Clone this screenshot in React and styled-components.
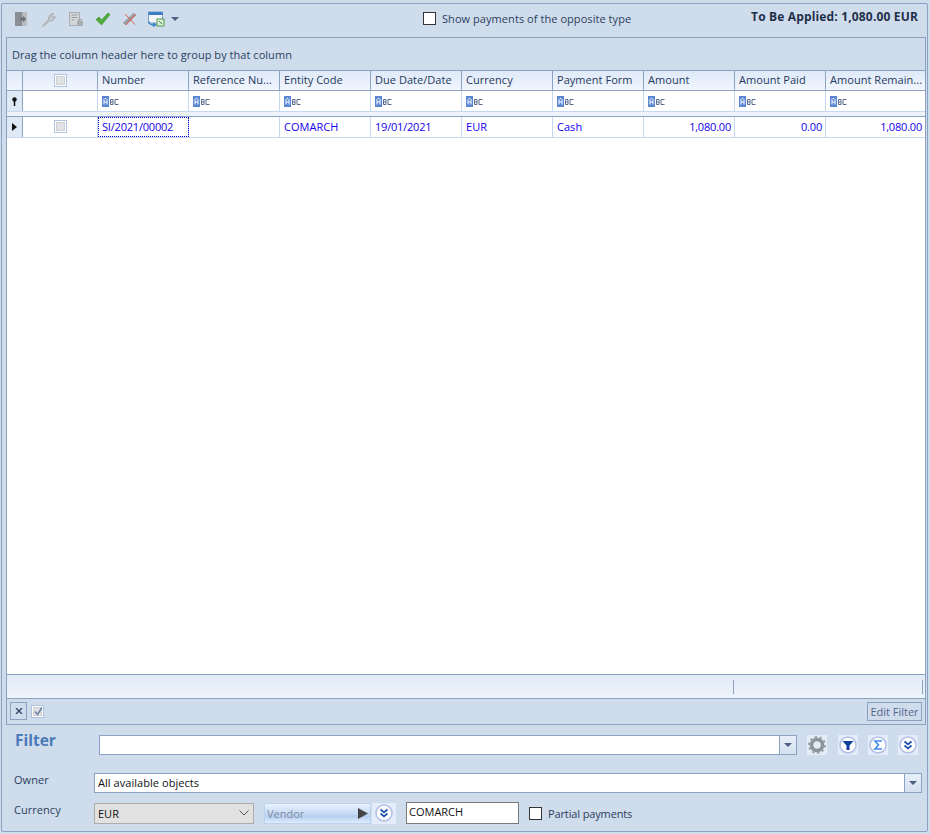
import React from "react";
import styled, { createGlobalStyle } from "styled-components";

const Global = createGlobalStyle`
  html, body { margin: 0; padding: 0; background: #cfdcec; }
  body { font-family: "Open Sans", "Liberation Sans", sans-serif; font-size: 11px; color: #1e395b; }
  * { box-sizing: border-box; }
`;

const Frame = styled.div`
  width: 927px;
  height: 829px;
  margin: 3px 0 0 1px;
  padding: 0 1px 0 4px;
  border: 1px solid #8ba2c0;
  border-radius: 2px;
  display: flex;
  flex-direction: column;
`;

const Toolbar = styled.div`
  height: 33px;
  display: flex;
  align-items: center;
  padding: 0 8px 3px 2px;
  flex: none;
`;

const ToolIcon = styled.span`
  width: 27px;
  height: 24px;
  display: flex;
  align-items: center;
  justify-content: center;
  flex: none;
`;

const Caret = styled.span`
  width: 0;
  height: 0;
  margin-left: 1px;
  border-left: 4px solid transparent;
  border-right: 4px solid transparent;
  border-top: 4px solid #4c5f80;
`;

const Check = styled.span`
  position: relative;
  width: 13px;
  height: 13px;
  flex: none;
  background: ${(p) => (p.$muted ? "#e0e2e5" : "#fff")};
  border: 1px solid ${(p) => (p.$muted ? "#aec3e2" : "#333")};
  box-shadow: ${(p) => (p.$muted ? "inset 0 0 0 1px #fff, inset 0 0 0 2px #cfd1d4" : "none")};
  display: inline-block;
`;

const Tick = styled.svg`
  position: absolute;
  left: 1px;
  top: 0;
`;

const OppositeToggle = styled.label`
  display: flex;
  align-items: center;
  gap: 6px;
  margin: 0 0 2px 244px;
  letter-spacing: 0.06px;
  color: #2b3f5f;
`;

const ToApply = styled.div`
  margin-left: auto;
  margin-bottom: 5px;
  font-weight: 700;
  font-size: 12px;
  letter-spacing: 0.16px;
  color: #1f2f4a;
`;

const Grid = styled.div`
  flex: 1;
  display: flex;
  flex-direction: column;
  border: 1px solid #8ba2c0;
  border-bottom: none;
  min-height: 0;
`;

const GroupPanel = styled.div`
  height: 33px;
  flex: none;
  padding: 9px 0 0 5px;
  line-height: 15px;
  letter-spacing: 0.04px;
  color: #2b3f5f;
  border-bottom: 1px solid #8ba2c0;
`;

const Row = styled.div`
  display: grid;
  grid-template-columns: 16px 75px repeat(8, 91px) 1fr;
  flex: none;
  height: ${(p) => p.$h}px;
  background: #fff;
  border-bottom: 1px solid ${(p) => p.$line || "#c5d8f0"};
`;

const Indicator = styled.div`
  background: ${(p) => (p.$head ? "linear-gradient(#dfe9f8, #f1f6fe)" : "#dfe9f6")};
  border-right: 1px solid #8ba2c0;
  display: flex;
  align-items: center;
  justify-content: center;
`;

const HeadCell = styled.div`
  padding: 0 0 ${(p) => (p.$center ? 0 : 3)}px ${(p) => (p.$center ? 0 : 4)}px;
  white-space: nowrap;
  overflow: hidden;
  color: #1e395b;
  letter-spacing: 0.04px;
  background: linear-gradient(#dfe9f8, #f1f6fe);
  border-right: ${(p) => (p.$last ? "none" : "1px solid #8ba2c0")};
  display: flex;
  align-items: center;
  justify-content: ${(p) => (p.$center ? "center" : "flex-start")};
`;

const FilterCell = styled.div`
  border-right: ${(p) => (p.$last ? "none" : "1px solid #c5d8f0")};
  padding: 5px 0 0 4px;
  display: flex;
  align-items: flex-start;
`;

const DataCell = styled.div`
  padding: 0 ${(p) => (p.$right ? "3px" : "0")} 2px ${(p) => (p.$center ? 0 : 4)}px;
  border-right: ${(p) => (p.$last ? "none" : "1px solid #c5d8f0")};
  color: #1400f0;
  letter-spacing: ${(p) => (p.$digits ? "-0.2px" : "0.04px")};
  display: flex;
  align-items: center;
  justify-content: ${(p) => (p.$right ? "flex-end" : p.$center ? "center" : "flex-start")};
  outline: ${(p) => (p.$focus ? "1px dotted #0000c8" : "none")};
  outline-offset: -1px;
`;

const Spacer = styled.div`
  height: 5px;
  flex: none;
  background: #eef3fa;
  border-bottom: 1px solid #8ba2c0;
`;

const Empty = styled.div`
  flex: 1;
  background: #fff;
  border-bottom: 1px solid #8ba2c0;
`;

const GridFooter = styled.div`
  height: 24px;
  flex: none;
  background: linear-gradient(#e0eaf7, #eef4fc);
  border-bottom: 1px solid #8ba2c0;
  display: flex;
  justify-content: flex-end;
  align-items: center;
  padding-right: 2px;
`;

const FooterCell = styled.span`
  width: ${(p) => p.$w}px;
  height: 14px;
  border-right: 1px solid #8ba2c0;
`;

const FilterBar = styled.div`
  height: 26px;
  flex: none;
  display: flex;
  align-items: center;
  padding: 0 3px 1px 3px;
  border-bottom: 1px solid #8ba2c0;
`;

const CloseBtn = styled.span`
  width: 17px;
  height: 18px;
  border: 1px solid #8ba2c0;
  display: flex;
  align-items: center;
  justify-content: center;
  margin-right: 4px;
`;

const EditFilter = styled.span`
  margin-left: auto;
  width: 55px;
  height: 19px;
  border: 1px solid #8ba2c0;
  display: flex;
  align-items: center;
  justify-content: center;
  color: #55658a;
`;

const Panel = styled.div`
  flex: none;
  height: 106px;
  display: flex;
  flex-direction: column;
  padding: 0 3px 0 8px;
`;

const TopLine = styled.div`
  display: flex;
  align-items: center;
  height: 39px;
  flex: none;
`;

const FilterTitle = styled.div`
  width: 84px;
  margin: -10px 0 0 1px;
  font-size: 15.5px;
  font-weight: 700;
  color: #4a7ab8;
  flex: none;
`;

const Combo = styled.div`
  display: flex;
  width: ${(p) => p.$w}px;
  height: 20px;
  flex: none;
  background: #fff;
  border: 1px solid #8ba2c0;
`;

const ComboText = styled.div`
  flex: 1;
  padding-left: 3px;
  line-height: 18px;
  color: #111;
  letter-spacing: 0.05px;
`;

const ComboBtn = styled.div`
  width: 17px;
  background: linear-gradient(#e7eff9, #d5e1f0);
  border-left: 1px solid #8ba2c0;
  display: flex;
  align-items: center;
  justify-content: center;
`;

const RoundIcon = styled.span`
  width: 20px;
  height: 20px;
  margin-left: ${(p) => p.$ml}px;
  flex: none;
  display: flex;
  align-items: center;
  justify-content: center;
  background: #e3ecf8;
`;

const FieldRow = styled.div`
  display: flex;
  align-items: center;
  height: 22px;
  flex: none;
  margin: ${(p) => p.$mt || 0}px 0 8px;
`;

const Label = styled.div`
  width: 80px;
  flex: none;
  margin-top: -8px;
  color: #2b3f5f;
  letter-spacing: 0.04px;
`;

const SelectBox = styled.div`
  width: 160px;
  height: 21px;
  background: #e1e1e1;
  border: 1px solid #adadad;
  display: flex;
  align-items: center;
  justify-content: space-between;
  padding: 0 4px 0 3px;
  color: #111;
  flex: none;
`;

const VendorBtn = styled.div`
  width: 107px;
  height: 21px;
  margin-left: 10px;
  padding: 0 2px;
  flex: none;
  display: flex;
  align-items: center;
  justify-content: space-between;
  color: #7f8ba0;
  border: 1px solid #bcd2ee;
  background: linear-gradient(#eaf2fc 0%, #c6daf4 50%, #b5cff1 65%, #e0ecfb 100%);
`;

const VendorMore = styled.span`
  width: 24px;
  height: 21px;
  margin: 0 10px 0 1px;
  flex: none;
  display: flex;
  align-items: center;
  justify-content: center;
  background: #e3ecf8;
`;

const TextBox = styled.div`
  width: 113px;
  height: 22px;
  flex: none;
  background: #fff;
  border: 1px solid #7a7a7a;
  padding-left: 2px;
  line-height: 18px;
  color: #111;
`;

const PartialToggle = styled.label`
  display: flex;
  align-items: center;
  gap: 6px;
  margin-left: 10px;
  letter-spacing: -0.13px;
  color: #2b3f5f;
`;

const Abc = () => (
  <svg width="17" height="11" viewBox="0 0 17 11">
    <rect width="7" height="11" fill="#5b86d2" />
    <path d="M2 8.500V3.500L3 2.500h1l1 1V8.500M2 6h3" fill="none" stroke="#fff" />
    <path d="M8.500 3.500v5h2.500V6H8.500M8.500 3.500H11V6M16.500 3.500h-3.500v5h3.500" fill="none" stroke="#5a6c8c" />
  </svg>
);

const Chevron = ({ color = "#4c5f80" }) => (
  <svg width="8" height="4" viewBox="0 0 8 4"><path d="M0 0h8L4 4z" fill={color} /></svg>
);

const DoubleDown = () => (
  <svg width="20" height="20" viewBox="0 0 20 20">
    <circle cx="10" cy="10" r="8" fill="#fff" stroke="#b4c0e6" strokeWidth="1.6" />
    <path d="M6.500 6.500 10 9.500l3.500-3M6.500 10.500l3.500 3 3.500-3" fill="none" stroke="#1c4fa8" strokeWidth="1.7" />
  </svg>
);

const columns = [
  "Number", "Reference Nu...", "Entity Code", "Due Date/Date", "Currency",
  "Payment Form", "Amount", "Amount Paid", "Amount Remain...",
];

const rowData = [
  { v: "SI/2021/00002", focus: true, digits: true }, { v: "" }, { v: "COMARCH" }, { v: "19/01/2021", digits: true }, { v: "EUR" },
  { v: "Cash" }, { v: "1,080.00", right: true, digits: true }, { v: "0.00", right: true, digits: true }, { v: "1,080.00", right: true, digits: true },
];

function App() {
  return (
    <>
      <Global />
      <Frame>
        <Toolbar>
          <ToolIcon>
            <svg width="14" height="14" viewBox="0 0 14 14">
              <rect x="0" y="0" width="12" height="14" fill="#b9bcc0" />
              <rect x="0" y="0" width="7" height="14" fill="#8b8f94" />
              <path d="M5 5.500h3V3.500l3 3.500-3 3.500V8.500H5z" fill="#6f7377" />
            </svg>
          </ToolIcon>
          <ToolIcon>
            <svg width="16" height="16" viewBox="0 0 16 16">
              <path d="M1.500 14.500 8 8c-.8-2.500 1-5.500 4.500-5.500L10.500 5l1 1.500 2.500-1c.3 3-2.500 5-5.500 4.200l-6 6z" fill="#c6c9cc" stroke="#a5a9ae" />
            </svg>
          </ToolIcon>
          <ToolIcon>
            <svg width="16" height="16" viewBox="0 0 16 16">
              <path d="M1.500 1.500h10v13h-10z" fill="#d4d7da" stroke="#a8acb0" />
              <path d="M3.500 4h6M3.500 6.500h6M3.500 9h3" stroke="#979ba0" />
              <rect x="9" y="10" width="6" height="5" fill="#a9adb1" />
              <path d="M10.500 10V8.500h3V10" fill="none" stroke="#a0a4a8" />
            </svg>
          </ToolIcon>
          <ToolIcon>
            <svg width="16" height="14" viewBox="0 0 16 14">
              <path d="M1 7.500 4 5l2.500 3L13 1l2 1.500L6.500 13z" fill="#4fae3a" stroke="#2f8a2a" strokeWidth=".6" />
            </svg>
          </ToolIcon>
          <ToolIcon>
            <svg width="16" height="14" viewBox="0 0 16 14">
              <path d="M2 12 13 2" stroke="#9a9ea3" strokeWidth="3.500" />
              <path d="M3 2l10 10.500M13.500 2.500 4 13" stroke="#e5493d" strokeWidth=".9" fill="none" />
            </svg>
          </ToolIcon>
          <ToolIcon>
            <svg width="17" height="16" viewBox="0 0 17 16">
              <rect x=".5" y="1" width="14" height="11" fill="#f2f6fb" stroke="#7f9cc4" />
              <rect x=".5" y="1" width="14" height="3" fill="#3d7cc4" />
              <rect x="9" y="8" width="7" height="7" fill="#dff0d8" stroke="#4c9a4c" />
              <path d="M11 10l3 3" stroke="#2f7d2f" />
              <path d="M1 10.500c0 2.500 2 3.500 6 3.500M5 12l2.500 2L5 15.500" fill="none" stroke="#2e7fc2" strokeWidth="1.300" />
            </svg>
          </ToolIcon>
          <Caret />
          <OppositeToggle>
            <Check />
            Show payments of the opposite type
          </OppositeToggle>
          <ToApply>To Be Applied: 1,080.00 EUR</ToApply>
        </Toolbar>

        <Grid>
          <GroupPanel>Drag the column header here to group by that column</GroupPanel>
          <Row $h={20} $line="#8ba2c0">
            <Indicator $head />
            <HeadCell $center><Check $muted /></HeadCell>
            {columns.map((c, i) => (
              <HeadCell key={c} $last={i === columns.length - 1}>{c}</HeadCell>
            ))}
          </Row>
          <Row $h={21}>
            <Indicator>
              <svg width="7" height="9" viewBox="0 0 7 9">
                <circle cx="3.500" cy="2.500" r="2.200" fill="#111" />
                <path d="M3.500 4v5" stroke="#111" strokeWidth="1.500" />
              </svg>
            </Indicator>
            <FilterCell />
            {columns.map((c, i) => (
              <FilterCell key={c} $last={i === columns.length - 1}><Abc /></FilterCell>
            ))}
          </Row>
          <Spacer />
          <Row $h={21}>
            <Indicator>
              <svg width="5" height="8" viewBox="0 0 5 8"><path d="M0 0l5 4-5 4z" fill="#111" /></svg>
            </Indicator>
            <DataCell $center><Check $muted /></DataCell>
            {rowData.map((d, i) => (
              <DataCell key={i} $right={d.right} $digits={d.digits} $focus={d.focus} $last={i === rowData.length - 1}>{d.v}</DataCell>
            ))}
          </Row>
          <Empty />
          <GridFooter>
            <FooterCell $w={1} />
            <FooterCell $w={189} />
          </GridFooter>
          <FilterBar>
            <CloseBtn>
              <svg width="8" height="6" viewBox="0 0 8 6"><path d="M1 0l6 6M7 0 1 6" stroke="#3b4a66" strokeWidth="1.400" /></svg>
            </CloseBtn>
            <Check $muted>
              <Tick width="11" height="11" viewBox="0 0 11 11"><path d="M2 5.500 4.500 8.500 9 1.500" fill="none" stroke="#6f84a6" strokeWidth="1.600" /></Tick>
            </Check>
            <EditFilter>Edit Filter</EditFilter>
          </FilterBar>
        </Grid>
        <Panel>
          <TopLine>
            <FilterTitle>Filter</FilterTitle>
            <Combo $w={698}>
              <ComboText />
              <ComboBtn><Chevron /></ComboBtn>
            </Combo>
            <RoundIcon $ml={10}>
              <svg width="18" height="18" viewBox="0 0 18 18">
                <circle cx="9" cy="9" r="5.500" fill="none" stroke="#8c9499" strokeWidth="3.500" />
                <circle cx="9" cy="9" r="8" fill="none" stroke="#9aa2a6" strokeWidth="2" strokeDasharray="2.500 2.500" />
              </svg>
            </RoundIcon>
            <RoundIcon $ml={11}>
              <svg width="20" height="20" viewBox="0 0 20 20">
                <circle cx="10" cy="10" r="8" fill="#fff" stroke="#b4c0e6" strokeWidth="1.600" />
                <path d="M4.500 6h11L11.500 10.500V15h-3v-4.500z" fill="#0f3f9c" />
              </svg>
            </RoundIcon>
            <RoundIcon $ml={10}>
              <svg width="20" height="20" viewBox="0 0 20 20">
                <circle cx="10" cy="10" r="8" fill="#fff" stroke="#b4c0e6" strokeWidth="1.600" />
                <path d="M14 6H7l3.500 4L7 14h7" fill="none" stroke="#3c8cf0" strokeWidth="1.600" />
              </svg>
            </RoundIcon>
            <RoundIcon $ml={10}><DoubleDown /></RoundIcon>
          </TopLine>
          <FieldRow $mt={8}>
            <Label>Owner</Label>
            <Combo $w={828}>
              <ComboText>All available objects</ComboText>
              <ComboBtn><Chevron /></ComboBtn>
            </Combo>
          </FieldRow>
          <FieldRow>
            <Label>Currency</Label>
            <SelectBox>
              EUR
              <svg width="10" height="6" viewBox="0 0 10 6"><path d="M.5.500 5 5 9.500.500" fill="none" stroke="#555" /></svg>
            </SelectBox>
            <VendorBtn>
              Vendor
              <svg width="10" height="11" viewBox="0 0 10 11"><path d="M0 0l10 5.500L0 11z" fill="#444" /></svg>
            </VendorBtn>
            <VendorMore><DoubleDown /></VendorMore>
            <TextBox>COMARCH</TextBox>
            <PartialToggle>
              <Check />
              Partial payments
            </PartialToggle>
          </FieldRow>
        </Panel>
      </Frame>
    </>
  );
}

export default App;
